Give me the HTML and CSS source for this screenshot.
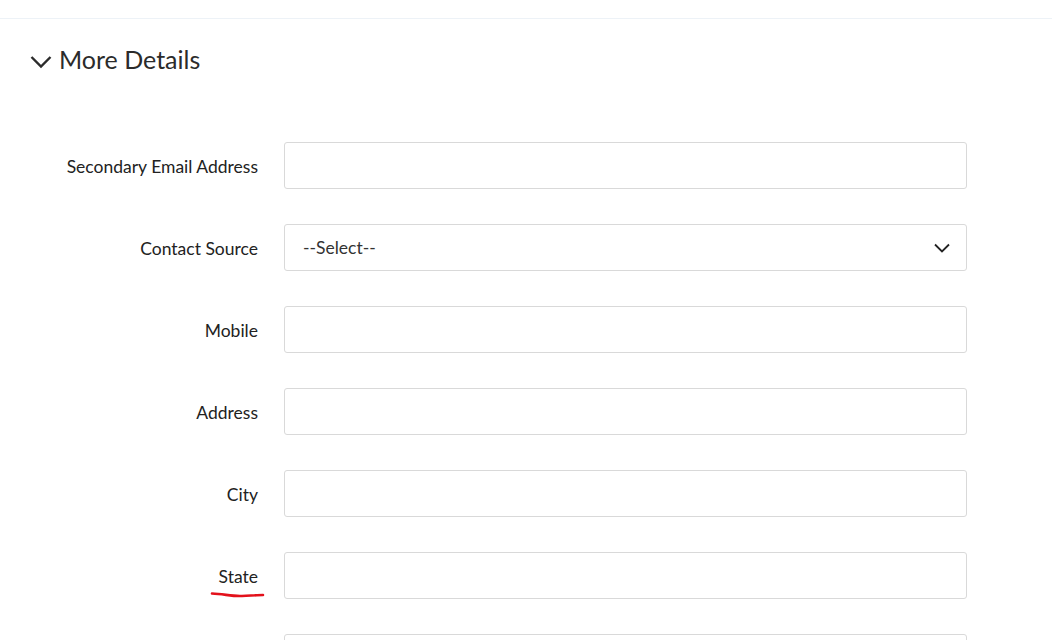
FILE: index.html
```html
<!DOCTYPE html>
<html lang="en">
<head>
    <meta charset="UTF-8">
    <meta name="viewport" content="width=device-width, initial-scale=1.0">
    <title>More Details</title>
    <link rel="stylesheet" href="styles.css">
</head>
<body>
    <div class="top-bar"></div>

    <section class="details">
        <h2 class="details-title">
            <svg class="chevron" width="22" height="14" viewBox="0 0 22 14">
                <path d="M1.5 2 L11 11.5 L20.5 2" fill="none" stroke="#2b2b2b" stroke-width="2.4"/>
            </svg>
            More Details
        </h2>

        <form class="details-form">
            <label class="field-label" for="secEmail">Secondary Email Address</label>
            <input class="field-input" type="text" id="secEmail">

            <label class="field-label" for="source">Contact Source</label>
            <div class="select-wrap">
                <select class="field-input field-select" id="source">
                    <option>--Select--</option>
                </select>
                <svg class="select-arrow" width="16" height="10" viewBox="0 0 16 10">
                    <path d="M1 1.5 L8 8.5 L15 1.5" fill="none" stroke="#222" stroke-width="1.8"/>
                </svg>
            </div>

            <label class="field-label" for="mobile">Mobile</label>
            <input class="field-input" type="text" id="mobile">

            <label class="field-label" for="address">Address</label>
            <input class="field-input" type="text" id="address">

            <label class="field-label" for="city">City</label>
            <input class="field-input" type="text" id="city">

            <label class="field-label marked" for="state">State
                <svg class="mark" width="56" height="10" viewBox="0 0 56 10">
                    <path d="M2 3.5 C 14 4, 22 6.5, 32 6 C 42 5.5, 48 5, 53 5" fill="none" stroke="#e3111b" stroke-width="2.6" stroke-linecap="round"/>
                </svg>
            </label>
            <input class="field-input" type="text" id="state">

            <label class="field-label" for="zip">Zip Code</label>
            <input class="field-input" type="text" id="zip">
        </form>
    </section>
</body>
</html>
```

FILE: styles.css
```css
body {
    margin: 0;
    font-family: Lato, "Open Sans", sans-serif;
    color: #222;
    background: #fff;
    overflow: hidden;
}

.top-bar {
    height: 18px;
    border-bottom: 1px solid #edf2f7;
    margin-right: 2px;
}

.details-title {
    display: flex;
    align-items: center;
    gap: 7px;
    margin: 25px 0 0 30px;
    font-size: 25px;
    font-weight: 400;
    color: #2b2b2b;
    line-height: 30px;
}

.chevron {
    margin-top: 5px;
}

.details-form {
    display: grid;
    grid-template-columns: 258px 683px;
    column-gap: 26px;
    row-gap: 35px;
    align-items: center;
    margin-top: 68px;
}

.field-label {
    text-align: right;
    font-size: 17.5px;
    color: #222;
    padding-top: 2px;
}

.field-label.marked {
    position: relative;
}

.mark {
    position: absolute;
    right: -8px;
    top: 26px;
}

.field-input {
    box-sizing: border-box;
    width: 683px;
    height: 47px;
    border: 1px solid #d9d9d9;
    border-radius: 3px;
    background: #fff;
    font-family: inherit;
    font-size: 17.5px;
    color: #333;
    padding: 0 18px;
    margin: 0;
    outline: none;
}

.select-wrap {
    position: relative;
}

.field-select {
    appearance: none;
    -webkit-appearance: none;
    display: block;
}

.select-arrow {
    position: absolute;
    right: 17px;
    top: 19px;
    pointer-events: none;
}
```
